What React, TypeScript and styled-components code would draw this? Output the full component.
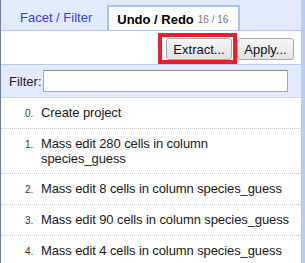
import React from 'react';
import styled, { createGlobalStyle } from 'styled-components';

const GlobalStyle = createGlobalStyle`
    html, body {
        margin: 0;
        padding: 0;
        background: #ffffff;
        font-family: "Liberation Sans", Arial, sans-serif;
    }
`;

const Panel = styled.div`
    width: 305px;
    height: 263px;
    box-sizing: border-box;
    border-left: 1px solid #6f7c9c;
    border-right: 4px solid #b9cbf8;
    background: #ffffff;
    overflow: hidden;
    display: flex;
    flex-direction: column;
    & > * {
        flex-shrink: 0;
    }
`;

const TabBar = styled.div`
    height: 31px;
    box-sizing: border-box;
    background: #e3e9fd;
    border-bottom: 1px solid #b3c6f3;
    display: flex;
    align-items: flex-end;
    gap: 5px;
    padding-left: 9px;
`;

const Tab = styled.div<{ active?: boolean }>`
    box-sizing: border-box;
    height: 25px;
    display: flex;
    align-items: center;
    font-size: 13px;
    padding: ${(p) => (p.active ? '1px 10px 0 8px' : '0 10px 0 10px')};
    color: ${(p) => (p.active ? '#000000' : '#3b3bd6')};
    font-weight: ${(p) => (p.active ? 'bold' : 'normal')};
    background: ${(p) => (p.active ? '#ffffff' : 'transparent')};
    border: ${(p) => (p.active ? '2px solid #a9c2f6' : 'none')};
    border-bottom: none;
`;

const Count = styled.span`
    font-size: 10px;
    font-weight: normal;
    color: #777777;
    margin-left: 4px;
`;

const Toolbar = styled.div`
    height: 33px;
    box-sizing: border-box;
    display: flex;
    justify-content: flex-end;
    align-items: flex-start;
    gap: 5px;
    padding: 7px 7px 0 0;
`;

const Highlight = styled.div`
    position: relative;
    &::after {
        content: '';
        position: absolute;
        top: -5px;
        left: -8px;
        right: -5px;
        bottom: -4px;
        border: 4px solid #e8202b;
        box-sizing: border-box;
        pointer-events: none;
    }
`;

const Button = styled.button<{ w: number }>`
    width: ${(p) => p.w}px;
    height: 22px;
    box-sizing: border-box;
    border: 1px solid #aaaaaa;
    border-radius: 3px;
    background: linear-gradient(#f6f6f6, #e2e2e2);
    font-family: "Liberation Sans", Arial, sans-serif;
    font-size: 13px;
    color: #111111;
    padding: 0;
    margin: 0;
`;

const FilterRow = styled.div`
    height: 34px;
    box-sizing: border-box;
    background: #e3e9fd;
    border-top: 1px solid #b6c8f4;
    border-bottom: 1px solid #c6d4f6;
    display: flex;
    align-items: center;
    padding: 0 13px 0 8px;
`;

const FilterLabel = styled.label`
    font-size: 13px;
    color: #222222;
`;

const FilterInput = styled.input`
    flex: 1;
    height: 22px;
    box-sizing: border-box;
    margin: 0 0 0 1px;
    border: 1px solid #a8a8a8;
    border-top-color: #8a8a8a;
    background: #ffffff;
    padding: 0 3px;
`;

const List = styled.div`
    display: flex;
    flex-direction: column;
`;

const Entry = styled.div`
    display: flex;
    align-items: baseline;
    padding: 7px 2px 7px 24px;
    border-bottom: 1px dotted #c8c8c8;
    font-size: 13px;
    line-height: 15px;
    color: #1a1a1a;
`;

const Num = styled.span`
    width: 16px;
    flex-shrink: 0;
    font-size: 10px;
    line-height: 15px;
    color: #333333;
`;

const Desc = styled.span`
    flex: 1;
    white-space: nowrap;
    letter-spacing: -0.1px;
`;

const entries = [
    ['Create project'],
    ['Mass edit 280 cells in column', 'species_guess'],
    ['Mass edit 8 cells in column species_guess'],
    ['Mass edit 90 cells in column species_guess'],
    ['Mass edit 4 cells in column species_guess'],
];

const App = () => {
    return (
        <>
            <GlobalStyle />
            <Panel>
                <TabBar>
                    <Tab>Facet / Filter</Tab>
                    <Tab active>
                        Undo / Redo<Count>16 / 16</Count>
                    </Tab>
                </TabBar>
                <Toolbar>
                    <Highlight>
                        <Button w={66}>Extract...</Button>
                    </Highlight>
                    <Button w={57}>Apply...</Button>
                </Toolbar>
                <FilterRow>
                    <FilterLabel>Filter:</FilterLabel>
                    <FilterInput />
                </FilterRow>
                <List>
                    {entries.map((lines, i) => (
                        <Entry key={i}>
                            <Num>{i}.</Num>
                            <Desc>
                                {lines.map((l, j) => (
                                    <React.Fragment key={j}>
                                        {j > 0 && <br />}
                                        {l}
                                    </React.Fragment>
                                ))}
                            </Desc>
                        </Entry>
                    ))}
                </List>
            </Panel>
        </>
    );
};

export default App;
